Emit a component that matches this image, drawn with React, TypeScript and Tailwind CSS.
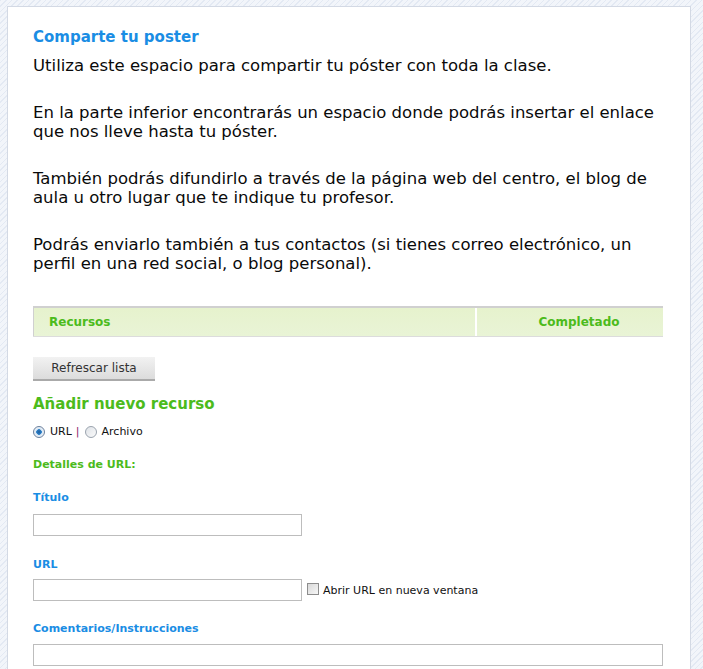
import React from 'react';

const blue = 'text-[#1a8de4]';
const green = 'text-[#4cbb1c]';

export default function App() {
    return (
        <div className="min-h-[669px] bg-[repeating-linear-gradient(135deg,#e3e9f3_0px,#e3e9f3_1px,#f2f5fa_1px,#f2f5fa_4px)] pt-[6px] pl-[7px] pr-[12px] font-['DejaVu_Sans',sans-serif]">
            <div className="min-h-[700px] bg-white border border-[#d3d9e4] pl-[25px] pr-[27px] pt-[21px]">
                <h2 className={`text-[15px] font-bold leading-[18px] ${blue}`}>Comparte tu poster</h2>

                <div className="mt-[10px] text-[16.5px] leading-[19px] text-[#0a0a0a]">
                    <p>Utiliza este espacio para compartir tu póster con toda la clase.</p>
                    <p className="mt-[28px]">En la parte inferior encontrarás un espacio donde podrás insertar el enlace que nos lleve hasta tu póster.</p>
                    <p className="mt-[28px]">También podrás difundirlo a través de la página web del centro, el blog de aula u otro lugar que te indique tu profesor.</p>
                    <p className="mt-[28px]">Podrás enviarlo también a tus contactos (si tienes correo electrónico, un perfil en una red social, o blog personal).</p>
                </div>

                <div className="mt-[33px] flex h-[31px] border-t-2 border-[#d0d0d0] border-b border-b-[#dcdcdc] bg-gradient-to-b from-[#e6f2cd] to-[#e9f4d6] text-[12px] font-bold">
                    <div className={`flex-1 flex items-center pl-[15px] border-l border-[#d0d0d0] ${green}`}>Recursos</div>
                    <div className={`w-[188px] flex items-center justify-center pl-[18px] border-l-2 border-white ${green}`}>Completado</div>
                </div>

                <button className="mt-[20px] block w-[122px] h-[24px] text-[12px] text-[#333] bg-gradient-to-b from-[#f2f2f2] to-[#dcdcdc] border-b-2 border-[#aaaaaa]">
                    Refrescar lista
                </button>

                <h3 className={`mt-[14px] text-[15px] font-bold leading-[18px] ${green}`}>Añadir nuevo recurso</h3>

                <div className="mt-[11px] flex items-center text-[11px] text-[#111]">
                    <span className="w-[12px] h-[12px] rounded-full border border-[#6a7f9c] bg-[radial-gradient(circle,#1f5f9e_0px,#2b7fc8_2.5px,#d8e6f3_3px,#f4f7fb_6px)]" />
                    <span className="ml-[5px]">URL</span>
                    <span className="ml-[4px] text-[#8a1b6b]">|</span>
                    <span className="ml-[5px] w-[12px] h-[12px] rounded-full border border-[#9aa3ae] bg-gradient-to-br from-[#dfe3e8] to-[#fafafa]" />
                    <span className="ml-[5px]">Archivo</span>
                </div>

                <div className={`mt-[16px] text-[11px] font-bold ${green}`}>Detalles de URL:</div>

                <div className={`mt-[17px] text-[11px] font-bold ${blue}`}>Título</div>
                <input className="mt-[7px] block w-[269px] h-[22px] border border-[#bdbdbd]" />

                <div className={`mt-[21px] text-[11px] font-bold ${blue}`}>URL</div>
                <div className="mt-[6px] flex items-center">
                    <input className="block w-[269px] h-[22px] border border-[#bdbdbd]" />
                    <span className="ml-[5px] mt-[-3px] w-[12px] h-[12px] border border-[#8d8d8d] bg-gradient-to-br from-[#d9d9d9] to-[#f7f7f7]" />
                    <span className="ml-[4px] mt-[2px] text-[11px] text-[#111]">Abrir URL en nueva ventana</span>
                </div>

                <div className={`mt-[20px] text-[11px] font-bold ${blue}`}>Comentarios/Instrucciones</div>
                <input className="mt-[6px] block w-[630px] h-[22px] border border-[#bdbdbd]" />
            </div>
        </div>
    );
}
